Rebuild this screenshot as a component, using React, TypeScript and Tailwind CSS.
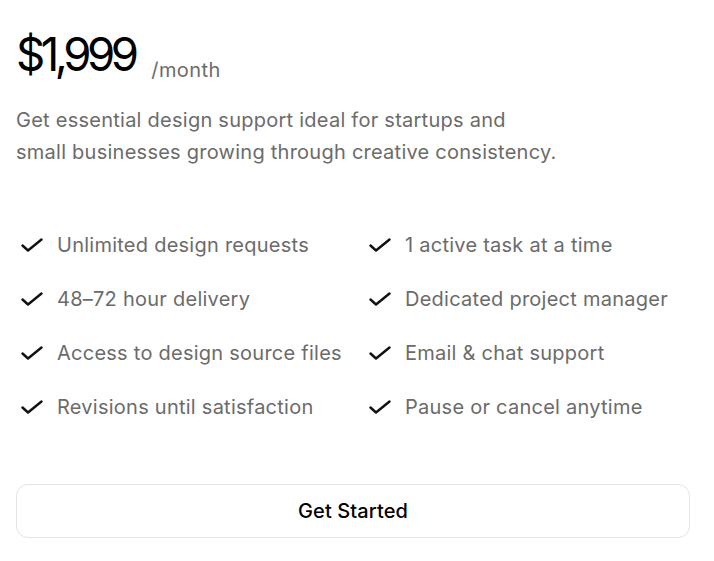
import React from "react";

const left = [
  "Unlimited design requests",
  "48–72 hour delivery",
  "Access to design source files",
  "Revisions until satisfaction",
];
const right = [
  "1 active task at a time",
  "Dedicated project manager",
  "Email & chat support",
  "Pause or cancel anytime",
];

function Check() {
  return (
    <svg width="22" height="14" viewBox="0 0 22 14" fill="none" className="shrink-0">
      <path d="M1.5 7.5 7 12.5 20.5 1.5" stroke="#111" strokeWidth="2.4" strokeLinecap="round" strokeLinejoin="round" />
    </svg>
  );
}

function Item({ text }: { text: string }) {
  return (
    <div className="flex items-center h-[54px] pl-[5px]">
      <Check />
      <span className="ml-[14px] text-[20px] text-[#6b6b6b] tracking-[0.25px]">{text}</span>
    </div>
  );
}

export default function App() {
  return (
    <div className="bg-white w-[714px] h-[561px] px-4 pt-[22px]" style={{ fontFamily: "Inter, 'Noto Sans', sans-serif" }}>
      <div className="flex items-baseline">
        <span className="text-[47px] leading-[64px] text-black tracking-[-4.6px] scale-x-[0.97] origin-left inline-block">$1,999</span>
        <span className="ml-[13px] text-[20px] text-[#6b6b6b] relative top-[6px] tracking-[0.4px]">/month</span>
      </div>
      <p className="mt-[18px] text-[20px] leading-[32px] text-[#6b6b6b] tracking-[0.25px]">
        Get essential design support ideal for startups and
        <br />
        small businesses growing through creative consistency.
      </p>
      <div className="mt-[50px] grid grid-cols-[348px_1fr]">
        <div className="flex flex-col">
          {left.map((t) => (
            <Item key={t} text={t} />
          ))}
        </div>
        <div className="flex flex-col">
          {right.map((t) => (
            <Item key={t} text={t} />
          ))}
        </div>
      </div>
      <button className="mt-[50px] w-[674px] h-[54px] rounded-[12px] border border-[#e4e4e4] bg-white text-[20px] text-black font-medium flex items-center justify-center tracking-[0.1px]">
        Get Started
      </button>
    </div>
  );
}
